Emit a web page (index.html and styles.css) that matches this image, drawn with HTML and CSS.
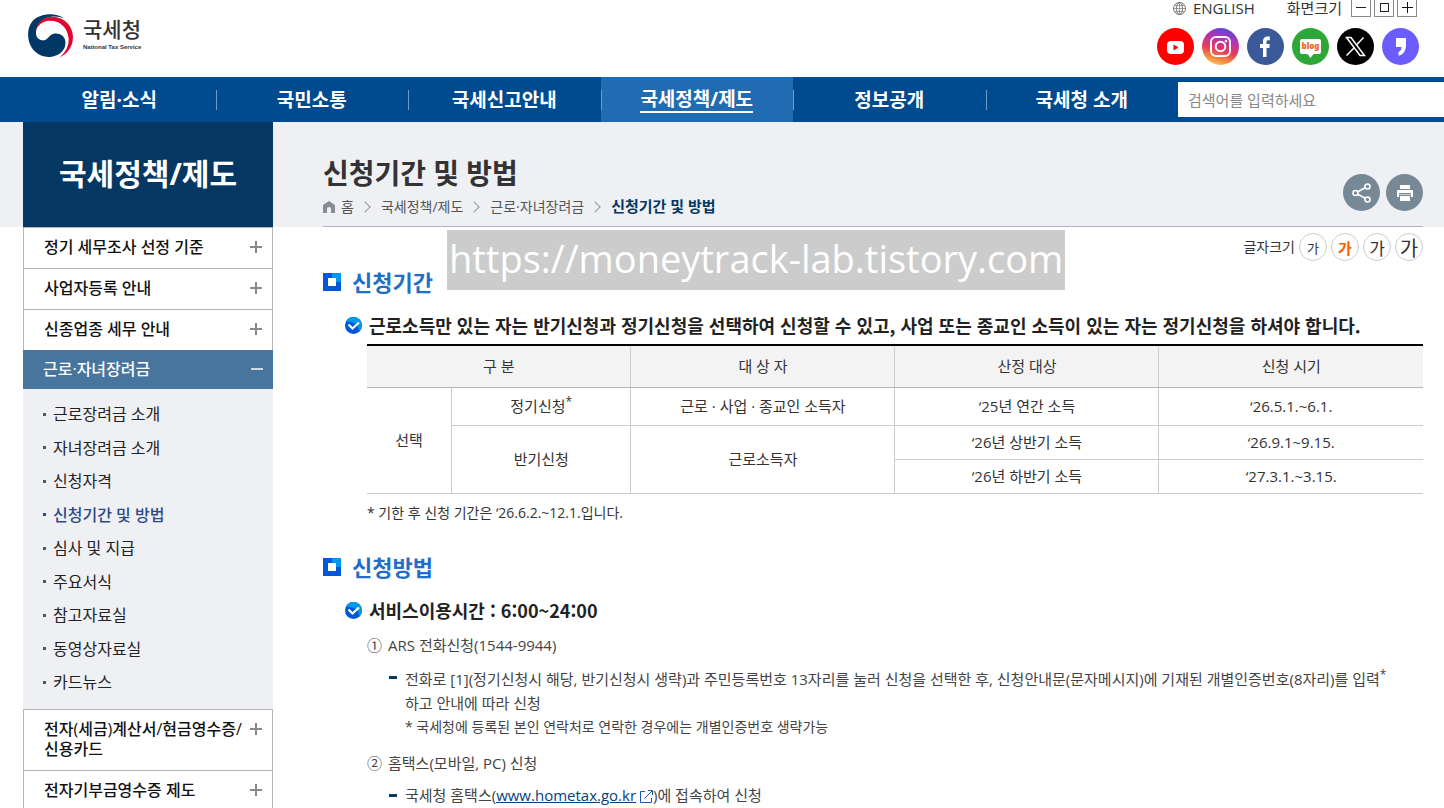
FILE: index.html
```html
<!DOCTYPE html>
<html lang="ko">
<head>
  <meta charset="UTF-8">
  <meta name="viewport" content="width=device-width, initial-scale=1.0">
  <title>신청기간 및 방법 | 국세청</title>
  <link rel="stylesheet" href="styles.css">
</head>
<body>
  <header class="header">
    <a href="#" class="logo">
      <svg class="logo-mark" viewBox="84 42 135 132" aria-hidden="true">
        <path fill="#003764" d="M192 55C170 39 133 38 108 54C84 70 78 105 91 135C104 165 137 174 155 170C181 166 199 147 196 124C194 107 178 98 162 101C146 104 144 121 129 121C116 121 107 111 108 97C109 72 127 54 153 50C169 48 182 51 192 55Z"/>
        <path fill="#e4032e" d="M108 91C112 66 132 49 160 50C195 52 219 80 219 112C218 142 202 162 178 173C196 158 207 138 206 116C204 83 179 61 149 62C128 63 115 74 108 91Z"/>
      </svg>
      <span class="logo-text">
        <strong>국세청</strong>
        <small>National Tax Service</small>
      </span>
    </a>
    <div class="header-right">
      <div class="util">
        <a href="#" class="lang">
          <svg width="13" height="13" viewBox="0 0 13 13" fill="none" stroke="#777" aria-hidden="true">
            <circle cx="6.500" cy="6.500" r="6"/><ellipse cx="6.500" cy="6.500" rx="3" ry="6"/><path d="M6.500 0v13M0 6.500h13M1.500 3.500h10M1.500 9.500h10" stroke-width=".7"/>
          </svg>
          ENGLISH
        </a>
        <span class="zoom-label">화면크기</span>
        <div class="zoom">
          <button type="button" aria-label="축소"><svg width="12" height="12" viewBox="0 0 12 12"><path d="M1 6.500h10" stroke="#222"/></svg></button>
          <button type="button" aria-label="기본"><svg width="12" height="12" viewBox="0 0 12 12"><rect x="2.500" y="2.500" width="8" height="8" fill="none" stroke="#222"/></svg></button>
          <button type="button" aria-label="확대"><svg width="12" height="12" viewBox="0 0 12 12"><path d="M1 6.500h11M6.500 1v11" stroke="#111"/></svg></button>
        </div>
      </div>
      <div class="sns">
        <a href="#" aria-label="유튜브"><svg viewBox="0 0 37 37"><circle cx="18.500" cy="18.500" r="18.500" fill="#f00"/><rect x="10" y="13" width="17" height="13" rx="4" fill="#fff"/><path d="M16.500 16.500v6l5-3z" fill="#f00"/></svg></a>
        <a href="#" aria-label="인스타그램"><svg viewBox="0 0 37 37"><defs><linearGradient id="insta" x1=".65" y1="0" x2=".35" y2="1"><stop offset="0" stop-color="#5548d8"/><stop offset=".3" stop-color="#b533ad"/><stop offset=".6" stop-color="#e83a5b"/><stop offset=".82" stop-color="#f3863e"/><stop offset="1" stop-color="#f8cb56"/></linearGradient></defs><circle cx="18.500" cy="18.500" r="18.500" fill="url(#insta)"/><g fill="none" stroke="#fff" stroke-width="2"><rect x="9" y="9" width="19" height="19" rx="5"/><circle cx="18.500" cy="18.500" r="4.800"/></g><circle cx="24" cy="13" r="1.300" fill="#fff"/></svg></a>
        <a href="#" aria-label="페이스북"><svg viewBox="0 0 37 37"><circle cx="18.500" cy="18.500" r="18.500" fill="#3b5998"/><path fill="#fff" d="M16 29V20h-3v-4h3v-2.500c0-3.500 2-5 4.500-5h2.300v3.700h-1.600c-1.200 0-1.700.5-1.700 1.800V16h3.300l-.5 4h-2.800v9z"/></svg></a>
        <a href="#" aria-label="블로그"><svg viewBox="0 0 37 37"><circle cx="18.500" cy="18.500" r="18.500" fill="#2da737"/><path fill="#fff" d="M10 11h17a2 2 0 0 1 2 2v11a2 2 0 0 1-2 2h-5.500l-3 4-3-4H10a2 2 0 0 1-2-2V13a2 2 0 0 1 2-2z"/><text class="blog-text" x="18.500" y="21" text-anchor="middle">blog</text></svg></a>
        <a href="#" aria-label="엑스"><svg viewBox="0 0 37 37"><circle cx="18.500" cy="18.500" r="18.500"/><path d="M9.500 9.500h4.500l13.500 18H23zM26.500 9.500l-7.500 8M17 20l-7.500 7.500" fill="none" stroke="#fff" stroke-width="1.500"/></svg></a>
        <a href="#" aria-label="네이버 포스트"><svg viewBox="0 0 37 37"><circle cx="18.500" cy="18.500" r="18.500" fill="#6b5cff"/><path fill="#fff" d="M14 10h10v7c0 6-3 10-7.500 10.500V24c2-.5 3-2.500 3-5H14z"/></svg></a>
      </div>
    </div>
  </header>

  <div class="gnb">
    <nav class="gnb-menu">
      <a href="#">알림·소식</a>
      <a href="#">국민소통</a>
      <a href="#">국세신고안내</a>
      <a href="#" class="on"><span>국세정책/제도</span></a>
      <a href="#">정보공개</a>
      <a href="#">국세청 소개</a>
    </nav>
    <form class="search">
      <input type="text" placeholder="검색어를 입력하세요" aria-label="검색어">
    </form>
  </div>

  <div class="wrap">
    <aside class="lnb">
      <h2 class="lnb-title">국세정책/제도</h2>
      <ul class="lnb-list">
        <li><a href="#" class="plus">정기 세무조사 선정 기준</a></li>
        <li><a href="#" class="plus">사업자등록 안내</a></li>
        <li><a href="#" class="plus">신종업종 세무 안내</a></li>
        <li class="open">
          <a href="#" class="minus">근로·자녀장려금</a>
          <ul class="lnb-sub">
            <li><a href="#">근로장려금 소개</a></li>
            <li><a href="#">자녀장려금 소개</a></li>
            <li><a href="#">신청자격</a></li>
            <li class="on"><a href="#">신청기간 및 방법</a></li>
            <li><a href="#">심사 및 지급</a></li>
            <li><a href="#">주요서식</a></li>
            <li><a href="#">참고자료실</a></li>
            <li><a href="#">동영상자료실</a></li>
            <li><a href="#">카드뉴스</a></li>
          </ul>
        </li>
        <li><a href="#" class="plus">전자(세금)계산서/현금영수증/<br>신용카드</a></li>
        <li><a href="#" class="plus">전자기부금영수증 제도</a></li>
      </ul>
    </aside>

    <main class="content">
      <div class="page-head">
        <div>
          <h1>신청기간 및 방법</h1>
          <div class="path">
            <a href="#" class="home"><svg width="12" height="12" viewBox="0 0 12 12" aria-hidden="true"><path fill="#868c94" d="M6 0l6 4v8H8V8a2 2 0 0 0-4 0v4H0V4z"/></svg>홈</a>
            <a href="#">국세정책/제도</a>
            <a href="#">근로·자녀장려금</a>
            <strong>신청기간 및 방법</strong>
          </div>
        </div>
        <div class="page-btns">
          <button type="button" aria-label="공유"><svg width="20" height="20" viewBox="0 0 20 20" fill="none" stroke="#fff" stroke-width="1.600"><circle cx="3.500" cy="10" r="2.500"/><circle cx="15.500" cy="3.500" r="2.500"/><circle cx="15.500" cy="16.500" r="2.500"/><path d="M5.700 8.800l7.500-4.100M5.700 11.200l7.500 4.100"/></svg></button>
          <button type="button" aria-label="인쇄"><svg width="18" height="18" viewBox="0 0 18 18" fill="#fff"><path d="M4 1h10v4H4zM2 6h14a1 1 0 0 1 1 1v6h-2V9H3v4H1V7a1 1 0 0 1 1-1zM4 12h10v5H4z"/><path d="M3 10h12v1H3z" opacity=".6"/></svg></button>
        </div>
      </div>

      <div class="font-size">
        <span>글자크기</span>
        <button type="button" class="fs-s">가</button>
        <button type="button" class="fs-m">가</button>
        <button type="button" class="fs-l">가</button>
        <button type="button" class="fs-xl">가</button>
      </div>
      <div class="watermark">https://moneytrack-lab.tistory.com</div>

      <section class="period">
        <h2 class="tit"><svg width="18" height="18" viewBox="0 0 18 18" aria-hidden="true"><path fill="#0057d9" d="M0 0h18v18H0z"/><path fill="#0098e8" d="M9 0h9v9H9z"/><path fill="#fff" d="M5 5h8v8H5z"/></svg>신청기간</h2>
        <h3 class="sub-tit"><svg width="17" height="17" viewBox="0 0 17 17" aria-hidden="true"><circle cx="8.500" cy="8.500" r="8.500" fill="#0057d9"/><path fill="#0098e8" d="M1 4.500A8.500 8.500 0 0 1 17 8q0 4-3 6 0-9-13-9.500z"/><path d="M3.500 7.500l4 4 6.500-6" fill="none" stroke="#fff" stroke-width="2.200"/></svg>근로소득만 있는 자는 반기신청과 정기신청을 선택하여 신청할 수 있고, 사업 또는 종교인 소득이 있는 자는 정기신청을 하셔야 합니다.</h3>
        <table class="tbl">
          <colgroup><col class="c1"><col class="c2"><col class="c3"><col class="c3"><col class="c3"></colgroup>
          <thead>
            <tr><th colspan="2">구 분</th><th>대 상 자</th><th>산정 대상</th><th>신청 시기</th></tr>
          </thead>
          <tbody>
            <tr class="first"><td rowspan="3">선택</td><td>정기신청<sup>*</sup></td><td>근로 · 사업 · 종교인 소득자</td><td>‘25년 연간 소득</td><td>‘26.5.1.~6.1.</td></tr>
            <tr><td rowspan="2">반기신청</td><td rowspan="2">근로소득자</td><td>‘26년 상반기 소득</td><td>‘26.9.1~9.15.</td></tr>
            <tr><td>‘26년 하반기 소득</td><td>‘27.3.1.~3.15.</td></tr>
          </tbody>
        </table>
        <p class="note">* 기한 후 신청 기간은 ‘26.6.2.~12.1.입니다.</p>
      </section>

      <section class="method">
        <h2 class="tit"><svg width="18" height="18" viewBox="0 0 18 18" aria-hidden="true"><path fill="#0057d9" d="M0 0h18v18H0z"/><path fill="#0098e8" d="M9 0h9v9H9z"/><path fill="#fff" d="M5 5h8v8H5z"/></svg>신청방법</h2>
        <h3 class="sub-tit"><svg width="17" height="17" viewBox="0 0 17 17" aria-hidden="true"><circle cx="8.500" cy="8.500" r="8.500" fill="#0057d9"/><path fill="#0098e8" d="M1 4.500A8.500 8.500 0 0 1 17 8q0 4-3 6 0-9-13-9.500z"/><path d="M3.500 7.500l4 4 6.500-6" fill="none" stroke="#fff" stroke-width="2.200"/></svg>서비스이용시간 : 6:00~24:00</h3>
        <div class="step">
          <p class="step-tit"><span>①</span>ARS 전화신청(1544-9944)</p>
          <div class="dash">
            전화로 [1](정기신청시 해당, 반기신청시 생략)과 주민등록번호 13자리를 눌러 신청을 선택한 후, 신청안내문(문자메시지)에 기재된 개별인증번호(8자리)를 입력<sup>*</sup><br>하고 안내에 따라 신청
            <small>* 국세청에 등록된 본인 연락처로 연락한 경우에는 개별인증번호 생략가능</small>
          </div>
        </div>
        <div class="step">
          <p class="step-tit"><span>②</span>홈택스(모바일, PC) 신청</p>
          <div class="dash">국세청 홈택스(<a href="#">www.hometax.go.kr</a> <svg width="13" height="13" viewBox="0 0 13 13" fill="none" stroke="#1558b0" aria-hidden="true"><path d="M5 1.500H.5v11h11V8M8 .5h4.500V5M12.500.5L4.500 8.500"/></svg>)에 접속하여 신청</div>
        </div>
      </section>
    </main>
  </div>
</body>
</html>
```
FILE: styles.css
```css
* {
  box-sizing: border-box;
}

body {
  margin: 0;
  font-family: "Open Sans", "Noto Sans CJK KR", sans-serif;
  font-size: 16px;
  line-height: 24px;
  color: #333;
  background: linear-gradient(#eff0f4, #eff0f4) 0 122px / 100% 105px no-repeat #fff;
}

h1, h2, h3, p, ul {
  margin: 0;
  padding: 0;
}

ul {
  list-style: none;
}

a {
  color: inherit;
  text-decoration: none;
}

button {
  display: flex;
  align-items: center;
  justify-content: center;
  padding: 0;
  border: 0;
  font-family: inherit;
  cursor: pointer;
}

/* header */
.header {
  display: flex;
  justify-content: space-between;
  height: 77px;
  padding: 0 25px 0 28px;
  background: #fff;
}

.logo {
  display: flex;
  align-items: flex-start;
  gap: 10px;
  padding-top: 14px;
}

.logo-mark {
  width: 45px;
  height: 44px;
}

.logo-text strong {
  display: block;
  padding-top: 3px;
  font-size: 21px;
  font-weight: 500;
  line-height: 25px;
}

.logo-text small {
  display: block;
  font-family: "Liberation Sans", sans-serif;
  font-size: 6px;
  font-weight: 700;
  line-height: 10px;
}

.util {
  display: flex;
  align-items: flex-end;
  justify-content: flex-end;
  height: 17px;
  font-size: 15px;
  line-height: 18px;
}

.lang {
  display: flex;
  align-items: center;
  gap: 7px;
  margin-right: 32px;
}

.zoom-label {
  margin-right: 9px;
}

.zoom {
  display: flex;
  gap: 3px;
  margin-right: 2px;
}

.zoom button {
  width: 20px;
  height: 20px;
  border: 1px solid #888;
  background: #fff;
}

.sns {
  display: flex;
  gap: 8px;
  padding-top: 11px;
}

.sns a,
.sns svg {
  display: block;
  width: 37px;
  height: 37px;
}

.blog-text {
  font-family: "Noto Sans", sans-serif;
  font-size: 8px;
  font-weight: 900;
  fill: #f26522;
}

/* main menu */
.gnb {
  display: flex;
  align-items: center;
  height: 45px;
  padding-left: 23px;
  background: #004a8f;
}

.gnb-menu {
  display: flex;
  flex: 1;
}

.gnb-menu a {
  display: flex;
  flex: 1 1 0;
  align-items: center;
  justify-content: center;
  height: 45px;
  font-size: 19px;
  font-weight: 700;
  color: #fff;
}

.gnb-menu a + a::before {
  content: "";
  width: 1px;
  height: 20px;
  margin-right: auto;
  background: #6f9bc5;
}

.gnb-menu a + a::after {
  content: "";
  width: 1px;
  margin-left: auto;
}

.gnb-menu .on {
  background: #206cb3;
}

.gnb-menu .on span {
  line-height: 24px;
  border-bottom: 2px solid #fff;
}

.search {
  width: 266px;
}

.search input {
  display: block;
  width: 100%;
  height: 35px;
  padding: 0 10px;
  border: 0;
  font-family: inherit;
  font-size: 15px;
}

.search input::placeholder {
  color: #888;
}

/* side menu */
.wrap {
  display: flex;
  gap: 50px;
  padding: 0 21px 0 23px;
}

.lnb {
  flex: 0 0 250px;
}

.lnb-title {
  height: 105px;
  font-size: 30px;
  line-height: 104px;
  text-align: center;
  color: #fff;
  background: #043762;
}

.lnb-list > li {
  border: 1px solid #b5b5b5;
  border-bottom: 0;
}

.lnb-list > li > a {
  display: flex;
  align-items: flex-start;
  justify-content: space-between;
  padding: 9px 10px 11px 20px;
  font-size: 16px;
  font-weight: 500;
  line-height: 20px;
  white-space: nowrap;
  color: #111;
}

.plus::after,
.minus::after {
  content: "";
  flex: 0 0 12px;
  height: 12px;
  margin-top: 4px;
  background: linear-gradient(#888, #888) center / 12px 2px no-repeat, linear-gradient(#888, #888) center / 2px 12px no-repeat;
}

.minus::after {
  background: linear-gradient(#cfdbe6, #cfdbe6) center / 12px 2px no-repeat;
}

.lnb-list > .open {
  border: 0;
}

.lnb-list > .open > a {
  padding-bottom: 10px;
  color: #fff;
  background: #48759d;
}

.lnb-sub {
  display: flex;
  flex-direction: column;
  justify-content: space-between;
  min-height: 320px;
  padding: 15px 0 17px 20px;
  font-size: 16px;
  line-height: 20px;
  color: #222;
  background: #eff0f4;
}

.lnb-sub li {
  display: flex;
  align-items: center;
  gap: 7px;
}

.lnb-sub li::before {
  content: "";
  width: 3px;
  height: 3px;
  background: #555;
}

.lnb-sub .on {
  font-weight: 500;
  color: #2c4a85;
}

.lnb-sub .on::before {
  background: #2c4a85;
}

/* content */
.content {
  position: relative;
  flex: 1;
  min-width: 0;
}

.page-head {
  display: flex;
  justify-content: space-between;
  height: 105px;
  padding-top: 31px;
  border-bottom: 1px solid #afb3c4;
}

.page-head h1 {
  font-size: 28px;
  line-height: 41px;
}

.path {
  display: flex;
  align-items: center;
  font-size: 14px;
  line-height: 25px;
  color: #555;
}

.path .home {
  display: flex;
  align-items: center;
  gap: 6px;
}

.path a::after {
  content: "";
  display: inline-block;
  width: 7px;
  height: 7px;
  margin: 0 12px 1px 7px;
  border: solid #999;
  border-width: 1px 1px 0 0;
  transform: rotate(45deg);
}

.path .home::after {
  margin: 0 12px 0 1px;
}

.path strong {
  font-size: 15px;
  color: #043762;
}

.page-btns {
  display: flex;
  gap: 6px;
  padding-top: 21px;
}

.page-btns button {
  width: 37px;
  height: 37px;
  border-radius: 50%;
  background: #778896;
}

.font-size {
  display: flex;
  align-items: center;
  justify-content: flex-end;
  gap: 4px;
  padding-top: 6px;
  font-size: 14px;
}

.font-size button {
  width: 28px;
  height: 28px;
  border: 1px solid #ccc;
  border-radius: 50%;
  color: #333;
  background: #fff;
}

.font-size .fs-s {
  font-size: 13px;
}

.font-size .fs-m {
  font-size: 15px;
  font-weight: 700;
  color: #ff5a00;
}

.font-size .fs-l {
  font-size: 17px;
}

.font-size .fs-xl {
  font-size: 20px;
}

.watermark {
  position: absolute;
  top: 108px;
  left: 124px;
  height: 60px;
  padding: 0 2px;
  font-size: 38px;
  line-height: 56px;
  white-space: nowrap;
  color: #fff;
  background: #ccc;
}

.period {
  padding-top: 5px;
}

.method {
  padding-top: 26px;
}

.tit {
  display: flex;
  align-items: center;
  gap: 11px;
  font-size: 22px;
  font-weight: 700;
  line-height: 32px;
  color: #1f6fc9;
}

.sub-tit {
  display: flex;
  align-items: center;
  gap: 7px;
  padding: 14px 0 5px 22px;
  font-family: "Noto Sans CJK KR", sans-serif;
  font-size: 18px;
  font-weight: 700;
  line-height: 27px;
  white-space: nowrap;
  color: #222;
}

.tbl {
  width: calc(100% - 44px);
  margin-left: 44px;
  table-layout: fixed;
  border-collapse: collapse;
  border-top: 2px solid #000;
  font-size: 15px;
  line-height: 20px;
  text-align: center;
}

.c1 {
  width: 8%;
}

.c2 {
  width: 17%;
}

.c3 {
  width: 25%;
}

.tbl th {
  height: 42px;
  padding: 0;
  border-bottom: 1px solid #b5b5b5;
  font-weight: 400;
  background: #f3f3f3;
}

.tbl td {
  height: 34px;
  padding: 0;
  border-bottom: 1px solid #ccc;
}

.tbl .first td {
  height: 38px;
}

.tbl th + th,
.tbl td + td,
.tbl tr + tr td {
  border-left: 1px solid #ccc;
}

sup {
  font-size: 12px;
  line-height: 0;
}

.note {
  padding: 7px 0 0 44px;
  font-size: 14px;
}

.step {
  padding-left: 44px;
  font-size: 15px;
  color: #444;
}

.step-tit {
  display: flex;
  gap: 6px;
  padding-top: 4px;
}

.step + .step .step-tit {
  padding-top: 12px;
}

.dash {
  position: relative;
  padding: 10px 0 0 38px;
  white-space: nowrap;
}

.step + .step .dash {
  padding-top: 8px;
}

.dash::before {
  content: "";
  position: absolute;
  top: 19px;
  left: 22px;
  width: 8px;
  height: 3px;
  background: #043762;
}

.dash small {
  display: block;
  font-size: 14px;
}

.dash a {
  color: #043f7c;
  text-decoration: underline;
}

.dash svg {
  vertical-align: -2px;
}
```
